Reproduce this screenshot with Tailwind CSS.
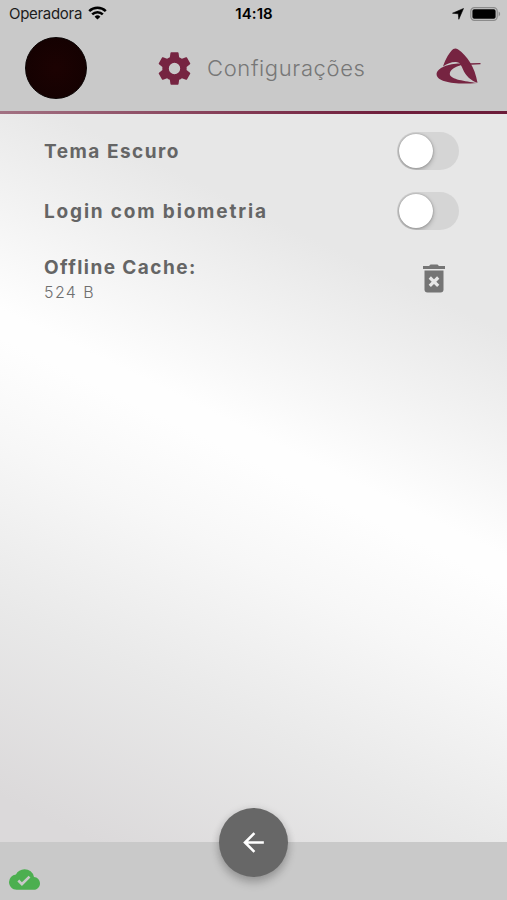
<!DOCTYPE html>
<html lang="pt-BR">
<head>
    <meta charset="UTF-8">
    <meta name="viewport" content="width=device-width, initial-scale=1.0">
    <title>Configurações</title>
    <script src="https://cdn.jsdelivr.net/npm/@tailwindcss/browser@4"></script>
</head>
<body class="font-['Inter','Liberation_Sans',sans-serif]">
    <div class="w-full h-[900px] flex flex-col overflow-hidden bg-[linear-gradient(206deg,#e7e7e7_0%,#e7e7e7_29%,#fefefe_48.5%,#fefefe_51%,#f7f7f7_60%,#e9e9e9_74%,#dbd9da_91%)]">
        <header class="h-[111px] shrink-0 bg-[#c9c9c9]">
            <!-- Status bar -->
            <div class="h-7 grid grid-cols-3 items-center pl-[9px] pr-[6px] text-black">
                <div class="flex items-center gap-[6px]">
                    <span class="text-[15px] leading-7 text-[#1c1c1c] tracking-[-0.3px]">Operadora</span>
                    <svg class="w-[19px] h-[14px] mb-[2px]" viewBox="0 0 19 14" fill="none" stroke="currentColor" stroke-width="2.5">
                        <path d="M1.2 5.2a11.8 11.8 0 0 1 16.6 0"/>
                        <path d="M4.2 8.4a7.5 7.5 0 0 1 10.6 0"/>
                        <path d="M9.5 13.6 6.6 10.7a4.1 4.1 0 0 1 5.8 0z" fill="currentColor" stroke="none"/>
                    </svg>
                </div>
                <span class="text-center -ml-[2px] text-[15px] leading-7 font-semibold tracking-[0.1px]">14:18</span>
                <div class="flex items-center justify-end gap-[6px] pb-[1px]">
                    <svg class="w-3 h-3" viewBox="0 0 12 12" fill="currentColor"><path d="M11.5.5 6.8 11.3 6.3 5.8.5 5.2z" stroke="currentColor" stroke-width=".6" stroke-linejoin="round"/></svg>
                    <svg class="w-[31px] h-[14px]" viewBox="0 0 31 14">
                        <rect x=".8" y=".7" width="26.4" height="12.6" rx="3.6" fill="none" stroke="#8b8b8b" stroke-width="1.2"/>
                        <rect x="2.4" y="2.3" width="23.2" height="9.4" rx="1.8" fill="#000"/>
                        <path d="M28.6 4.6c2 .8 2 4 0 4.8z" fill="#8b8b8b"/>
                    </svg>
                </div>
            </div>
            <!-- Title bar -->
            <div class="flex items-center h-20 pl-[25px] pr-[26px]">
                <div class="w-[62px] h-[62px] rounded-full bg-[radial-gradient(circle,#1c0202,#120101)] border border-[#0a0404]"></div>
                <svg class="w-[39px] h-[39px] ml-[68px]" viewBox="0 0 24 24" fill="#762441">
                    <path d="M19.43 12.98c.04-.32.07-.64.07-.98s-.03-.66-.07-.98l2.11-1.65c.19-.15.24-.42.12-.64l-2-3.46c-.12-.22-.39-.3-.61-.22l-2.49 1c-.52-.4-1.08-.73-1.69-.98l-.38-2.65A.488.488 0 0 0 14 2h-4c-.25 0-.46.18-.49.42l-.38 2.65c-.61.25-1.17.59-1.69.98l-2.49-1c-.23-.09-.49 0-.61.22l-2 3.46c-.13.22-.07.49.12.64l2.11 1.65c-.04.32-.07.65-.07.98s.03.66.07.98l-2.11 1.65c-.19.15-.24.42-.12.64l2 3.46c.12.22.39.3.61.22l2.49-1c.52.4 1.08.73 1.69.98l.38 2.65c.03.24.24.42.49.42h4c.25 0 .46-.18.49-.42l.38-2.65c.61-.25 1.17-.59 1.69-.98l2.49 1c.23.09.49 0 .61-.22l2-3.46c.12-.22.07-.49-.12-.64zM12 15.5a3.5 3.5 0 1 1 0-7 3.5 3.5 0 0 1 0 7"/>
                </svg>
                <h1 class="ml-[13px] text-[22px] font-light tracking-[0.63px] text-[#777]">Configurações</h1>
                <svg class="ml-auto mb-1 w-[45px] h-[36px]" viewBox="0 0 45 36" fill="#762441">
                    <path d="M7 18.500C9.500 11 13.500 4 17.300 1Q19.500-.3 21.800 1.200C31 7.500 39 19 41.500 34.800 35 33 29.500 27.500 26.800 21 25.500 17.800 24.500 14.800 21 14.200 16 13.600 12 15.500 7 18.500Z"/>
                    <path d="M25.500 15.600C14 15.200.6 19.500.6 26.500.8 34 20 37 41 35 29 33 14.500 31.500 13.800 26.200 13.500 21.800 19 18.600 25.500 16.900Z"/>
                    <path d="M24 15.600 44.500 15.100V16.200L26 17.200Z"/>
                </svg>
            </div>
        </header>
        <div class="h-[3px] shrink-0 bg-[linear-gradient(90deg,#a27283_0%,#853d57_45%,#70203d_75%,#6b1c39_100%)]"></div>

        <main class="flex-1 pt-[7px] pl-[44px] pr-[48px] text-[#656565]">
            <div class="flex items-center justify-between h-[60px]">
                <span class="pt-[2px] text-[19px] font-bold tracking-[1.5px]">Tema Escuro</span>
                <div class="w-[62px] h-[38px] mb-[1px] p-[2px] rounded-full bg-[#d5d5d5] overflow-hidden">
                    <div class="w-[34px] h-[34px] rounded-full bg-white shadow-[0_2px_5px_rgba(0,0,0,0.25),0_0_2px_rgba(0,0,0,0.3)]"></div>
                </div>
            </div>
            <div class="flex items-center justify-between h-[60px]">
                <span class="pt-[2px] text-[19px] font-bold tracking-[1.83px]">Login com biometria</span>
                <div class="w-[62px] h-[38px] mb-[1px] p-[2px] rounded-full bg-[#d5d5d5] overflow-hidden">
                    <div class="w-[34px] h-[34px] rounded-full bg-white shadow-[0_2px_5px_rgba(0,0,0,0.25),0_0_2px_rgba(0,0,0,0.3)]"></div>
                </div>
            </div>
            <div class="flex items-center justify-between pt-[14px]">
                <div>
                    <div class="text-[19px] leading-[26px] font-bold tracking-[1.43px]">Offline Cache:</div>
                    <div class="text-base leading-[23px] pb-[2px] font-light tracking-[1.4px] text-[#6f6f6f]">524 B</div>
                </div>
                <svg class="w-[22px] h-[29px] mr-[14px] mb-[4px]" viewBox="0 0 22 29" fill="#757575">
                    <path d="M0 2h6L7.500.5h7L16 2h6v3H0z"/>
                    <path d="M1.500 6.500h19v19a3 3 0 0 1-3 3h-13a3 3 0 0 1-3-3z"/>
                    <path d="m6.800 13.500 8.400 8.400m0-8.400-8.400 8.400" stroke="#e8e8e8" stroke-width="3.200"/>
                </svg>
            </div>
        </main>

        <footer class="relative h-[58px] shrink-0 bg-[#c9c9c9] flex items-end px-[9px] pb-[5px]">
            <svg class="w-[31px] h-[31px]" viewBox="0 0 24 24" fill="#4caf50">
                <path d="M19.350 10.040A7.490 7.490 0 0 0 12 4C9.110 4 6.600 5.640 5.350 8.040A5.994 5.994 0 0 0 0 14c0 3.310 2.690 6 6 6h13c2.760 0 5-2.240 5-5 0-2.640-2.050-4.780-4.650-4.960M10 17l-3.500-3.500 1.410-1.410L10 14.170 15.180 9l1.410 1.410z"/>
            </svg>
            <button class="absolute left-[219px] -top-[34px] w-[69px] h-[69px] rounded-full bg-[#676767] flex items-center justify-center shadow-[0_6px_10px_rgba(0,0,0,0.2),0_1px_9px_rgba(0,0,0,0.12)]">
                <svg class="w-[31px] h-[31px]" viewBox="0 0 24 24" fill="#fff"><path d="M20 11H7.830l5.590-5.590L12 4l-8 8 8 8 1.410-1.410L7.830 13H20z"/></svg>
            </button>
        </footer>
    </div>
</body>
</html>
